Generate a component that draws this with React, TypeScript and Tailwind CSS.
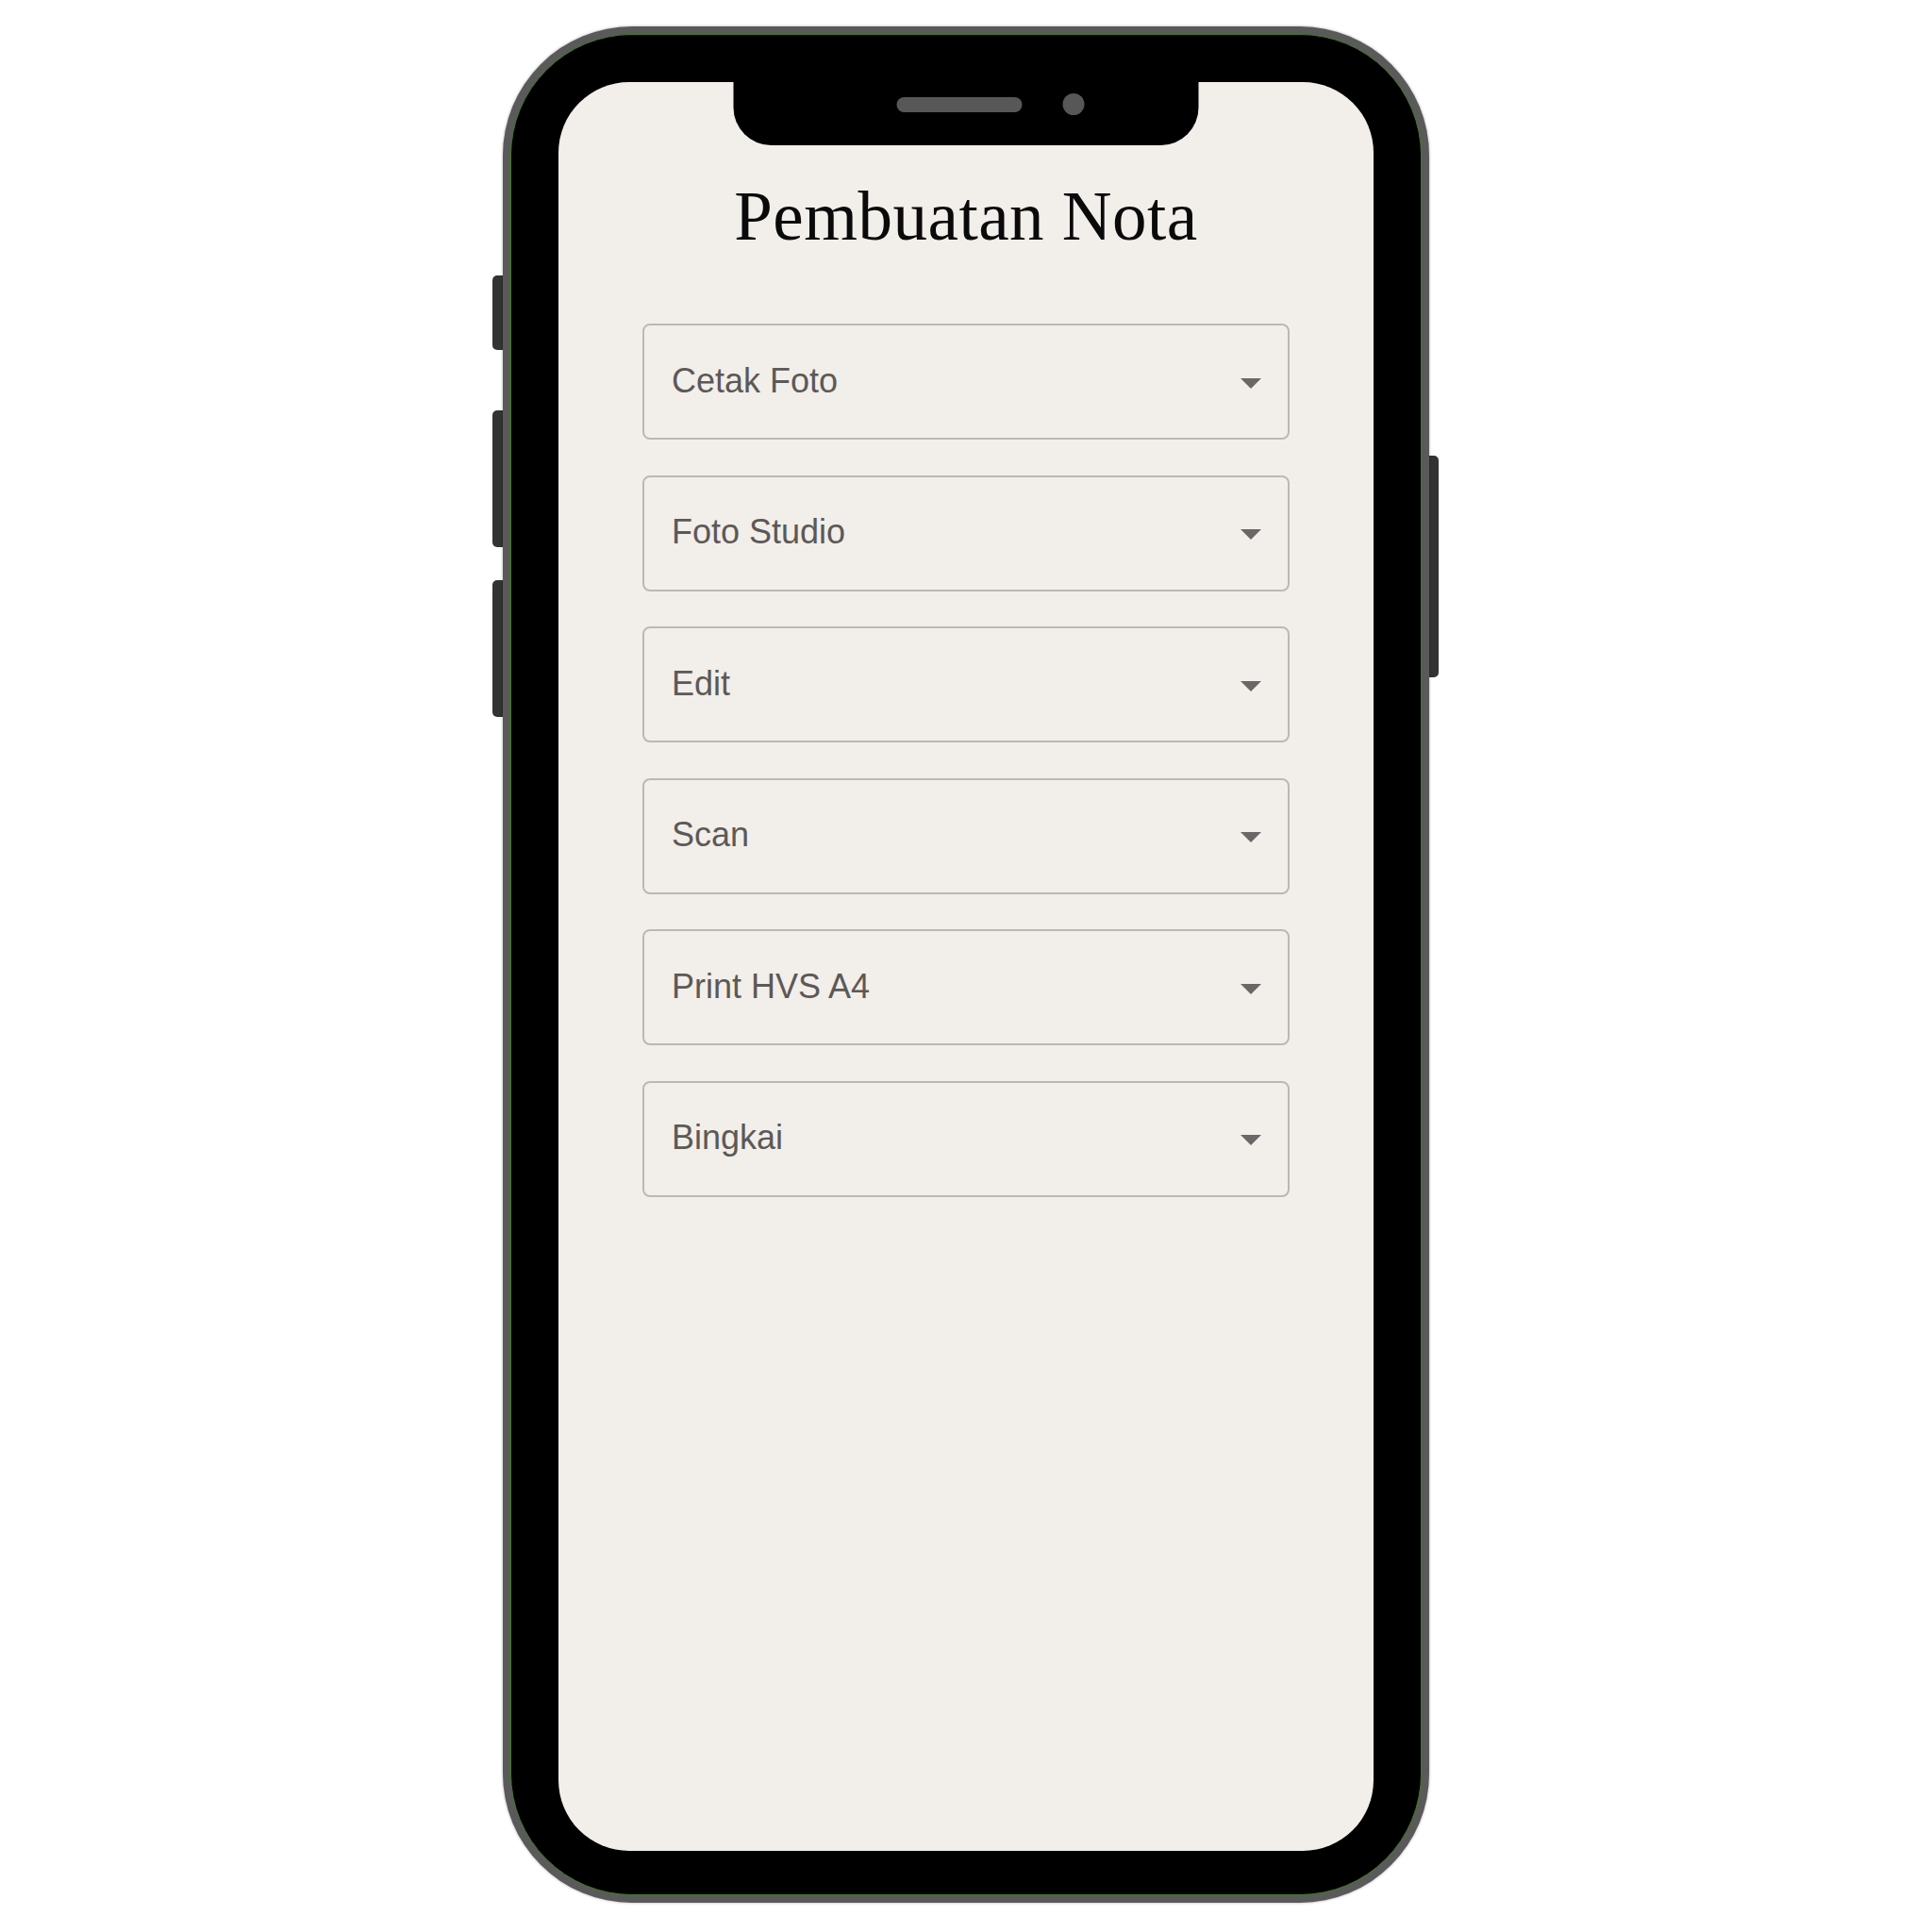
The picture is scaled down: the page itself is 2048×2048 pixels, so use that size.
import React from 'react'

const ITEMS = ['Cetak Foto', 'Foto Studio', 'Edit', 'Scan', 'Print HVS A4', 'Bingkai']

function Pilihan({ label }: { label: string }) {
  return (
    <div className="flex items-center justify-between h-[123px] border-2 border-[#bdb8b4] rounded-[8px] pl-[29px] pr-[28px]">
      <span className="mb-[3px] text-[36px] leading-[41px] text-[#5c5956]" style={{ fontFamily: '"Liberation Sans", Arial, sans-serif' }}>{label}</span>
      <svg width="22" height="11" viewBox="0 0 22 11" className="mt-[3px]">
        <path d="M0 0 L22 0 L11 11 Z" fill="#6a6866" />
      </svg>
    </div>
  )
}

export default function App() {
  return (
    <div className="min-h-[2048px] bg-white flex justify-center pt-[28px]">
      <div className="relative w-[982px] h-[1989px]">
        {/* side buttons */}
        <div className="absolute left-[-11px] top-[264px] w-[14px] h-[79px] bg-[#333333] rounded-l-[5px]" />
        <div className="absolute left-[-11px] top-[407px] w-[14px] h-[145px] bg-[#333333] rounded-l-[5px]" />
        <div className="absolute left-[-11px] top-[587px] w-[14px] h-[145px] bg-[#333333] rounded-l-[5px]" />
        <div className="absolute right-[-10px] top-[455px] w-[13px] h-[235px] bg-[#333333] rounded-r-[5px]" />

        <div className="relative h-full rounded-[137px] bg-[#5a5a5a] p-[8px] shadow-[0_0_3px_rgba(0,0,0,0.35)]">
          <div className="h-full rounded-[129px] bg-black border border-[#3f7a24] pt-[50px] pb-[46px] px-[50px]">
            <div className="relative h-full rounded-[75px] bg-[#f2eeea] overflow-hidden">
              {/* notch */}
              <div className="absolute top-0 left-1/2 -translate-x-1/2 w-[493px] h-[67px] bg-black rounded-b-[40px] flex items-start pl-[173px]">
                <div className="mt-[16px] w-[133px] h-[16px] rounded-full bg-[#575757]" />
                <div className="ml-[43px] mt-[12px] w-[23px] h-[23px] rounded-full bg-[#575757]" />
              </div>

              <h1 className="mt-[106px] text-center text-[73px] leading-[73px] tracking-[0.5px] text-[#0a0a0a]" style={{ fontFamily: '"Liberation Serif", Georgia, serif' }}>
                Pembuatan Nota
              </h1>

              <div className="mt-[77px] w-[686px] mx-auto flex flex-col gap-[37.5px]">
                {ITEMS.map((it) => (
                  <Pilihan key={it} label={it} />
                ))}
              </div>
            </div>
          </div>
        </div>
      </div>
    </div>
  )
}
